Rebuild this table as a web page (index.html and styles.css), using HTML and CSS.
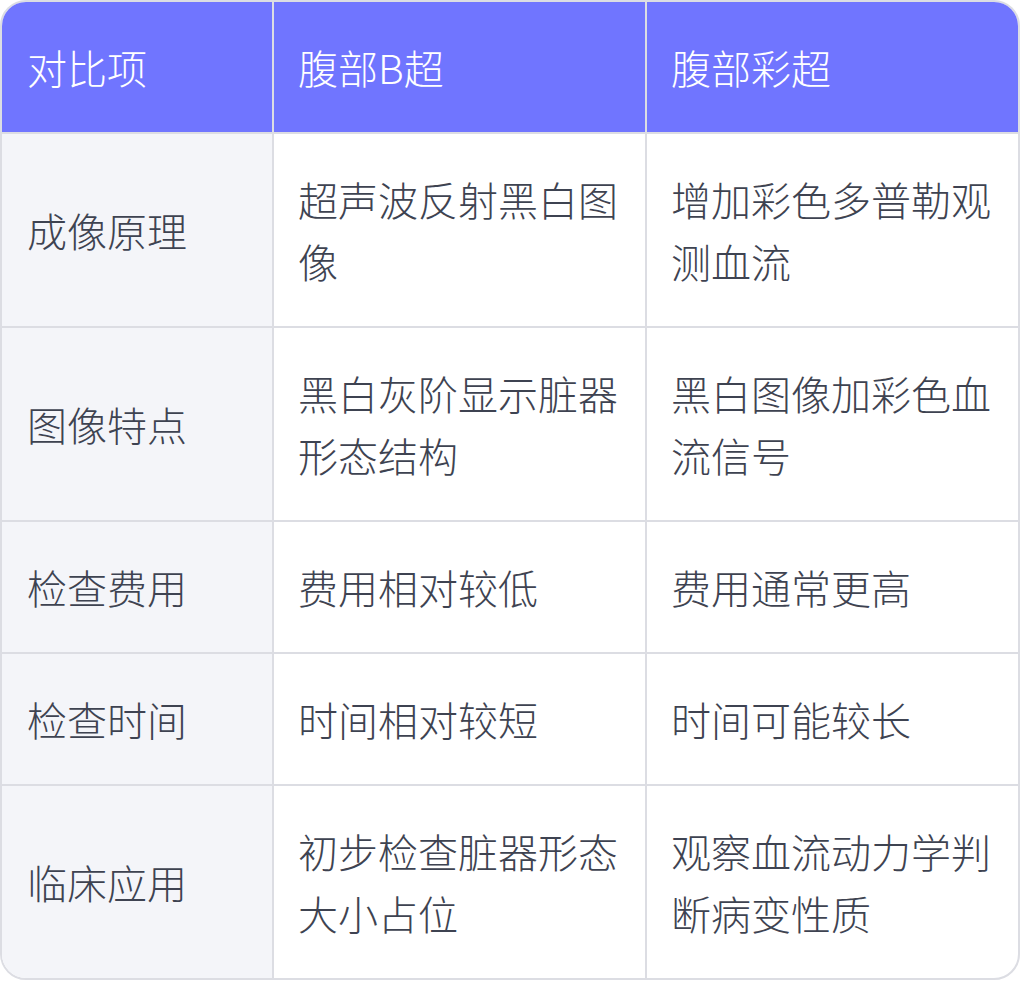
FILE: index.html
```html
<!DOCTYPE html>
<html lang="zh-CN">
<head>
<meta charset="utf-8">
<title>腹部B超与腹部彩超对比</title>
<link rel="stylesheet" href="styles.css">
</head>
<body>
<div class="card">
  <table class="compare">
    <thead>
      <tr>
        <th class="c1">对比项</th>
        <th class="c2">腹部B超</th>
        <th class="c3">腹部彩超</th>
      </tr>
    </thead>
    <tbody>
      <tr>
        <td class="label">成像原理</td>
        <td>超声波反射黑白图像</td>
        <td>增加彩色多普勒观测血流</td>
      </tr>
      <tr>
        <td class="label">图像特点</td>
        <td>黑白灰阶显示脏器形态结构</td>
        <td>黑白图像加彩色血流信号</td>
      </tr>
      <tr>
        <td class="label">检查费用</td>
        <td>费用相对较低</td>
        <td>费用通常更高</td>
      </tr>
      <tr>
        <td class="label">检查时间</td>
        <td>时间相对较短</td>
        <td>时间可能较长</td>
      </tr>
      <tr>
        <td class="label">临床应用</td>
        <td>初步检查脏器形态大小占位</td>
        <td>观察血流动力学判断病变性质</td>
      </tr>
    </tbody>
  </table>
</div>
</body>
</html>
```

FILE: styles.css
```css
html, body {
  margin: 0;
  padding: 0;
  background: #ffffff;
}

body {
  width: 1020px;
  height: 981px;
  font-family: "Noto Sans CJK SC", "Noto Sans", sans-serif;
}

.card {
  width: 1020px;
  box-sizing: border-box;
  border: 2px solid #dcdde3;
  border-radius: 26px;
  overflow: hidden;
  background: #ffffff;
}

.compare {
  width: 1016px;
  border-collapse: separate;
  border-spacing: 0;
  table-layout: fixed;
}

.compare th,
.compare td {
  text-align: left;
  vertical-align: middle;
  font-size: 40px;
  line-height: 62px;
  font-weight: 300;
  padding: 34px 24px 34px 24px;
  border-left: 2px solid #dcdde3;
  border-top: 2px solid #dcdde3;
  word-break: break-all;
}

.compare th {
  background: #7075ff;
  color: #ffffff;
  border-top: none;
}

.compare td {
  color: #3e4351;
}

.compare th:first-child,
.compare td:first-child {
  border-left: none;
  padding-left: 25px;
}

.compare .c1 { width: 221px; }
.compare .c2 { width: 323px; }

.compare td.label {
  background: #f4f5f9;
}
```
